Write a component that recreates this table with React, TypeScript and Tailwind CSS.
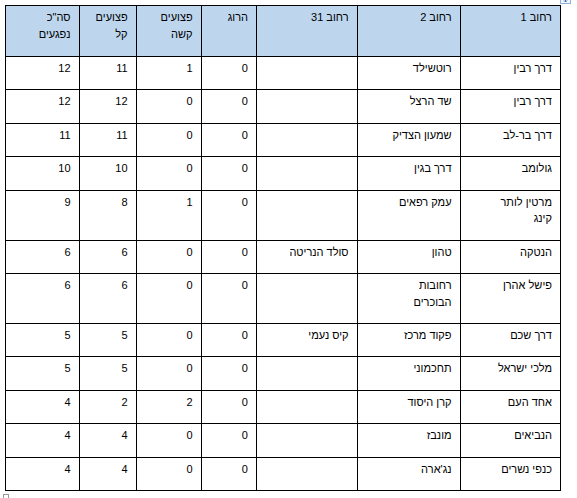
const header = [
  ["רחוב 1"],
  ["רחוב 2"],
  ["רחוב 31"],
  ["הרוג"],
  ["פצועים", "קשה"],
  ["פצועים", "קל"],
  ['סה"כ', "נפגעים"],
];

type Row = { cells: string[][]; tall?: boolean };

const rows: Row[] = [
  { cells: [["דרך רבין"], ["רוטשילד"], [""], ["0"], ["1"], ["11"], ["12"]] },
  { cells: [["דרך רבין"], ["שד הרצל"], [""], ["0"], ["0"], ["12"], ["12"]] },
  { cells: [["דרך בר-לב"], ["שמעון הצדיק"], [""], ["0"], ["0"], ["11"], ["11"]] },
  { cells: [["גולומב"], ["דרך בגין"], [""], ["0"], ["0"], ["10"], ["10"]] },
  { cells: [["מרטין לותר", "קינג"], ["עמק רפאים"], [""], ["0"], ["1"], ["8"], ["9"]], tall: true },
  { cells: [["הנטקה"], ["טהון"], ["סולד הנריטה"], ["0"], ["0"], ["6"], ["6"]] },
  { cells: [["פישל אהרן"], ["רחובות", "הבוכרים"], [""], ["0"], ["0"], ["6"], ["6"]], tall: true },
  { cells: [["דרך שכם"], ["פקוד מרכז"], ["קיס נעמי"], ["0"], ["0"], ["5"], ["5"]] },
  { cells: [["מלכי ישראל"], ["תחכמוני"], [""], ["0"], ["0"], ["5"], ["5"]] },
  { cells: [["אחד העם"], ["קרן היסוד"], [""], ["0"], ["2"], ["2"], ["4"]] },
  { cells: [["הנביאים"], ["מונבז"], [""], ["0"], ["0"], ["4"], ["4"]] },
  { cells: [["כנפי נשרים"], ["נג'ארה"], [""], ["0"], ["0"], ["4"], ["4"]] },
];

function Lines({ lines }: { lines: string[] }) {
  return (
    <>
      {lines.map((l, i) => (
        <div key={i}>{l || "\u00a0"}</div>
      ))}
    </>
  );
}

export default function App() {
  return (
    <div className="relative h-[498px] w-[577px] overflow-hidden bg-white pl-[5px] pt-[5px] font-['Liberation_Sans','DejaVu_Sans',sans-serif] text-[11px] leading-[16.7px] text-black">
      {/* table move handle */}
      <svg className="absolute left-[560px] top-[-7px]" width="11" height="11" viewBox="0 0 11 11">
        <rect x="0.5" y="0.5" width="10" height="10" fill="#f3f7fc" stroke="#8eaedb" />
        <path d="M5.5 2v7M2 5.5h7" stroke="#3c6cc0" strokeWidth="1" />
        <path d="M4 7.5l1.5 1.5 1.5-1.5M7.5 4l1.5 1.5-1.5 1.5M4 3.5L5.5 2 7 3.5" fill="none" stroke="#3c6cc0" strokeWidth="1" />
      </svg>

      <table dir="rtl" className="w-[555px] table-fixed border-collapse">
        <colgroup>
          <col className="w-[100.4px]" />
          <col className="w-[103px]" />
          <col className="w-[100.6px]" />
          <col className="w-[55.4px]" />
          <col className="w-[65px]" />
          <col className="w-[57px]" />
          <col className="w-[73.6px]" />
        </colgroup>
        <thead>
          <tr className="h-[51px] bg-[#bdd6ee]">
            {header.map((h, i) => (
              <th
                key={i}
                className="border border-black px-[8px] pb-0 pt-[3px] text-right align-top font-normal"
              >
                <Lines lines={h} />
              </th>
            ))}
          </tr>
        </thead>
        <tbody>
          {rows.map((r, ri) => (
            <tr key={ri} className={r.tall ? "h-[50px]" : "h-[33.4px]"}>
              {r.cells.map((c, ci) => (
                <td
                  key={ci}
                  className="border border-black px-[8px] pb-0 pt-[3px] text-right align-top"
                >
                  <Lines lines={c} />
                </td>
              ))}
            </tr>
          ))}
        </tbody>
      </table>

      {/* end-of-table paragraph mark */}
      <div className="mt-[3px] ml-[-2px] h-[6px] w-[6px] border border-[#9a9a9a]" />
    </div>
  );
}
